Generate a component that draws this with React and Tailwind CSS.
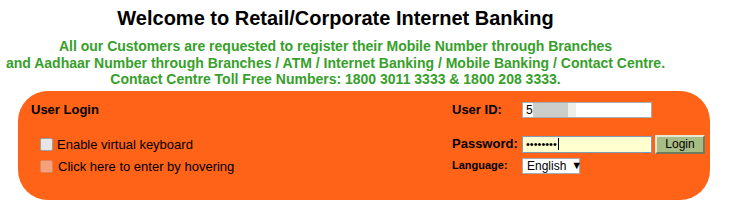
const Checkbox = ({ light }) => (
  <span
    className={`inline-block w-[13px] h-[13px] rounded-[2px] border ${
      light ? "bg-[#e6e6e6] border-[#a0a0a0]" : "bg-[#f5a27c] border-[#e0855c]"
    }`}
  />
);

const App = () => {
  return (
    <div className="w-[730px] h-[211px] bg-white font-['Liberation_Sans',Arial,sans-serif] overflow-hidden">
      <div className="w-[671px] text-center">
        <h1 className="pt-[6px] text-[20px] leading-[24px] font-bold text-black">
          Welcome to Retail/Corporate Internet Banking
        </h1>
        <div className="mt-[8px] text-[14px] leading-[16.5px] font-bold text-[#36a02a]">
          <p>All our Customers are requested to register their Mobile Number through Branches</p>
          <p className="whitespace-nowrap">and Aadhaar Number through Branches / ATM / Internet Banking / Mobile Banking / Contact Centre.</p>
          <p>Contact Centre Toll Free Numbers: 1800 3011 3333 &amp; 1800 208 3333.</p>
        </div>
      </div>

      <div className="ml-[18px] mt-[3px] w-[692px] h-[109px] rounded-[30px] bg-[#ff6317] flex justify-between text-black">
        <div className="pl-[13px] pt-[11px]">
          <div className="text-[13px] font-bold leading-[16px]">User Login</div>
          <div className="mt-[19px] pl-[9px] flex flex-col gap-[7px] text-[13px] leading-[15px]">
            <label className="flex items-center gap-[4px]">
              <Checkbox light />
              <span>Enable virtual keyboard</span>
            </label>
            <label className="flex items-center gap-[5px]">
              <Checkbox />
              <span>Click here to enter by hovering</span>
            </label>
          </div>
        </div>

        <div className="mr-[5px] pt-[11px] w-[253px]">
          <div className="flex items-center h-[16px]">
            <span className="w-[70px] text-[13px] font-bold">User ID:</span>
            <div className="w-[130px] h-[16px] bg-white border border-[#a5acb2] flex items-center text-[12px] pl-[3px]">
              <span>5</span>
              <span className="w-[35px] h-[14px] bg-[#cbcecb]" />
              <span className="w-[8px] h-[14px] bg-[#eeeeea]" />
            </div>
          </div>

          <div className="mt-[17px] flex items-center h-[19px]">
            <span className="w-[70px] text-[13px] font-bold">Password:</span>
            <div className="w-[130px] h-[17px] bg-[#ffffd0] border border-[#7f9db9] flex items-center pl-[3px] text-[11px] leading-none">
              <span>••••••••</span>
              <span className="ml-[1px] w-px h-[12px] bg-black" />
            </div>
            <button className="ml-[3px] w-[50px] h-[19px] bg-[#a8bd85] border-2 border-t-[#e3e9d7] border-l-[#e3e9d7] border-r-[#6f7a5e] border-b-[#6f7a5e] text-[12px] leading-none">
              Login
            </button>
          </div>

          <div className="mt-[4px] flex items-center h-[16px]">
            <span className="w-[70px] text-[11px] font-bold">Language:</span>
            <div className="w-[58px] h-[16px] bg-white border border-[#a5acb2] flex items-center pl-[4px] text-[12px] leading-none">
              <span>English</span>
              <span className="ml-[5px] text-[11px]">▼</span>
            </div>
          </div>
        </div>
      </div>
    </div>
  );
};

export default App;
